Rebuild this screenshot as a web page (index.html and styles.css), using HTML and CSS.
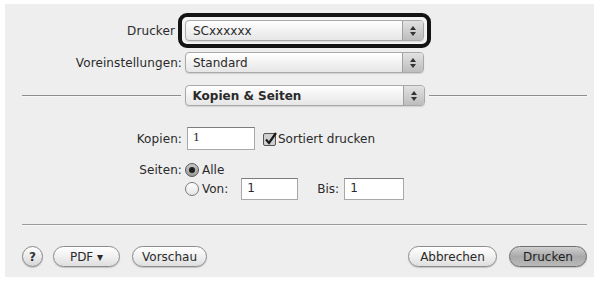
FILE: index.html
```html
<!DOCTYPE html>
<html lang="de">
<head>
<meta charset="utf-8">
<title>Drucken</title>
<link rel="stylesheet" href="styles.css">
</head>
<body>
<div class="panel">
  <div class="row r1">
    <div class="label nocolon">Drucker</div>
    <div class="hl">
      <div class="popup"><span class="ptext">SCxxxxxx</span><span class="arrows"><i class="up"></i><i class="down"></i></span></div>
    </div>
  </div>
  <div class="row r2">
    <div class="label">Voreinstellungen:</div>
    <div class="popup"><span class="ptext">Standard</span><span class="arrows"><i class="up"></i><i class="down"></i></span></div>
  </div>
  <div class="row r3">
    <div class="line"></div>
    <div class="popup"><span class="ptext bold">Kopien &amp; Seiten</span><span class="arrows"><i class="up"></i><i class="down"></i></span></div>
    <div class="line"></div>
  </div>
  <div class="row r4">
    <div class="label">Kopien:</div>
    <div class="field copies">1</div>
    <span class="check"><svg width="14" height="14" viewBox="0 0 14 14"><rect x="0.5" y="1.5" width="12" height="12" rx="1.5" fill="#cfcfcf" stroke="#555"/><path d="M3 7.5 L6 11 L13 1" fill="none" stroke="#1a1a1a" stroke-width="2.2"/></svg></span>
    <span class="ctext">Sortiert drucken</span>
  </div>
  <div class="row r5">
    <div class="label top">Seiten:</div>
    <div class="radios">
      <div class="ropt first"><span class="radio on"></span><span>Alle</span></div>
      <div class="ropt second"><span class="radio"></span><span class="von">Von:</span><div class="field from">1</div><span class="bis">Bis:</span><div class="field to">1</div></div>
    </div>
  </div>
  <div class="sep"></div>
  <div class="buttons">
    <span class="help">?</span>
    <span class="btn pdf">PDF ▾</span>
    <span class="btn preview">Vorschau</span>
    <span class="spacer"></span>
    <span class="btn cancel">Abbrechen</span>
    <span class="btn print">Drucken</span>
  </div>
</div>
</body>
</html>
```
FILE: styles.css
```css
html, body {
  margin: 0;
  padding: 0;
  background: #ffffff;
}
body {
  font-family: "DejaVu Sans", "Lucida Grande", sans-serif;
  font-size: 12px;
  color: #2a2a2a;
}
.panel {
  margin: 4px 10px 0 5px;
  height: 273px;
  background: #eeeeee;
  box-sizing: border-box;
  padding-top: 9px;
  display: flex;
  flex-direction: column;
}
.row {
  display: flex;
  align-items: center;
}
.label {
  width: 177px;
  text-align: right;
  flex: none;
  letter-spacing: 0.1px;
}
.label.nocolon {
  padding-right: 7px;
  box-sizing: border-box;
}
.hl {
  margin-left: -4px;
  border: 4px solid #141414;
  border-radius: 9px;
  padding: 3px;
  background: #f4f4f4;
}
.popup {
  width: 239px;
  height: 21px;
  box-sizing: border-box;
  border: 1px solid #a9a9a9;
  border-radius: 4px;
  background: linear-gradient(#ffffff, #f2f2f2 50%, #e6e6e6);
  display: flex;
  align-items: center;
  margin-left: 3px;
  box-shadow: 0 1px 1px rgba(0,0,0,0.12);
}
.hl .popup {
  margin-left: 0;
}
.ptext {
  flex: 1;
  padding-left: 7px;
  white-space: nowrap;
}
.ptext.bold {
  font-weight: bold;
}
.arrows {
  width: 20px;
  height: 19px;
  border-left: 1px solid #a0a0a0;
  border-radius: 0 3px 3px 0;
  background: linear-gradient(#e2e2e2, #bdbdbd);
  display: flex;
  flex-direction: column;
  align-items: center;
  justify-content: center;
  gap: 2px;
}
.arrows i {
  width: 0;
  height: 0;
  border-left: 3px solid transparent;
  border-right: 3px solid transparent;
}
.arrows .up {
  border-bottom: 4px solid #333;
}
.arrows .down {
  border-top: 4px solid #333;
}
.r2 {
  margin-top: 4px;
}
.r3 {
  margin-top: 12px;
  padding: 0 7px 0 17px;
  gap: 4px;
}
.r3 .popup {
  margin-left: 0;
  width: 240px;
  flex: none;
}
.line {
  flex: 1;
  height: 0;
  border-top: 1px solid #8e8e8e;
  border-bottom: 1px solid #f8f8f8;
}
.r4 {
  margin-top: 21px;
}
.field {
  height: 23px;
  box-sizing: border-box;
  background: #ffffff;
  border: 1px solid #a8a8a8;
  border-top-color: #7d7d7d;
  padding: 3px 0 0 5px;
  font-family: "DejaVu Serif", serif;
  font-size: 11px;
}
.field.copies {
  width: 68px;
  margin-left: 5px;
}
.check {
  margin-left: 8px;
  display: flex;
  height: 14px;
}
.ctext {
  margin-left: 1px;
}
.r5 {
  margin-top: 12px;
  align-items: flex-start;
}
.label.top {
  margin-top: 1px;
}
.radios {
  margin-left: 3px;
  display: flex;
  flex-direction: column;
}
.ropt {
  display: flex;
  align-items: center;
  gap: 3px;
}
.ropt.first {
  height: 16px;
}
.ropt.second {
  height: 22px;
}
.radio {
  width: 12px;
  height: 12px;
  border-radius: 50%;
  border: 1px solid #7a7a7a;
  background: linear-gradient(#ffffff, #e4e4e4);
  position: relative;
  flex: none;
}
.radio.on {
  background: linear-gradient(#c8c8c8, #9a9a9a);
  border-color: #555;
}
.radio.on::after {
  content: "";
  position: absolute;
  left: 3px;
  top: 3px;
  width: 6px;
  height: 6px;
  border-radius: 50%;
  background: #1e1e1e;
}
.field.from {
  width: 57px;
  height: 22px;
  margin-left: 10px;
  font-family: "DejaVu Sans", sans-serif;
  font-size: 12px;
  padding-top: 2px;
}
.bis {
  margin-left: 16px;
}
.field.to {
  width: 60px;
  height: 22px;
  margin-left: 2px;
  font-family: "DejaVu Sans", sans-serif;
  font-size: 12px;
  padding-top: 2px;
}
.sep {
  margin: 24px 7px 0 17px;
  border-top: 1px solid #9a9a9a;
  border-bottom: 1px solid #f8f8f8;
}
.buttons {
  margin-top: 20px;
  padding: 0 7px 0 17px;
  display: flex;
  align-items: center;
}
.help {
  width: 19px;
  height: 19px;
  border-radius: 50%;
  border: 1px solid #888;
  background: linear-gradient(#ffffff, #d6d6d6);
  display: flex;
  align-items: center;
  justify-content: center;
  font-weight: bold;
  font-size: 12px;
  color: #333;
  box-shadow: 0 1px 1px rgba(0,0,0,0.2);
}
.btn {
  height: 21px;
  box-sizing: border-box;
  border: 1px solid #8c8c8c;
  border-radius: 11px;
  background: linear-gradient(#ffffff, #f0f0f0 50%, #dedede);
  display: flex;
  align-items: center;
  justify-content: center;
  box-shadow: 0 1px 1px rgba(0,0,0,0.18);
  white-space: nowrap;
}
.btn.pdf {
  width: 67px;
  margin-left: 10px;
}
.btn.preview {
  width: 75px;
  margin-left: 12px;
}
.spacer {
  flex: 1;
}
.btn.cancel {
  width: 89px;
}
.btn.print {
  width: 78px;
  margin-left: 12px;
  background: linear-gradient(#d0d0d0, #a9a9a9 50%, #b9b9b9);
  border-color: #6f6f6f;
  color: #1e1e1e;
}
```
